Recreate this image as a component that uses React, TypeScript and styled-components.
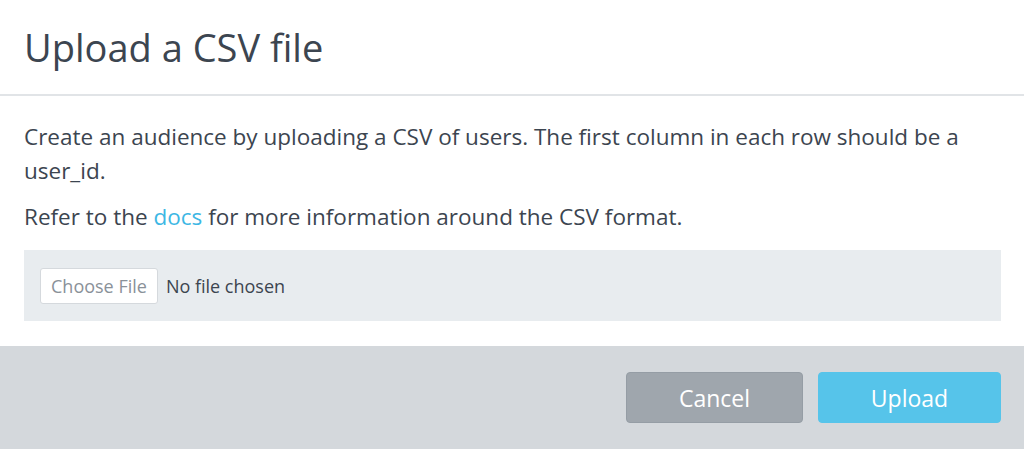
import styled, { createGlobalStyle } from "styled-components";

const GlobalStyle = createGlobalStyle`
  html, body {
    margin: 0;
    padding: 0;
    background: #ffffff;
  }
  body {
    font-family: "Open Sans", "Liberation Sans", sans-serif;
    color: #3c4550;
  }
`;

const Modal = styled.div`
  display: flex;
  flex-direction: column;
  width: 1024px;
  height: 449px;
  background: #fff;
  overflow: hidden;
`;

const ModalHeader = styled.div`
  height: 94px;
  padding: 0 24px;
  display: flex;
  align-items: center;
  border-bottom: 2px solid #e1e4e7;
`;

const ModalTitle = styled.h2`
  margin: 0;
  font-size: 38px;
  font-weight: 400;
  color: #3c4550;
`;

const ModalBody = styled.div`
  flex: 1;
  padding: 24px 23px 0 24px;
`;

const Paragraph = styled.p`
  margin: 0 0 12px;
  font-size: 22.5px;
  line-height: 34px;
  color: #3c4550;
`;

const DocsLink = styled.a`
  color: #3db7e4;
  text-decoration: none;
`;

const FileWell = styled.div`
  display: flex;
  align-items: center;
  gap: 8px;
  height: 71px;
  margin-top: 16px;
  padding: 0 16px;
  background: #e8ecef;
`;

const ChooseButton = styled.span`
  display: inline-flex;
  align-items: center;
  height: 36px;
  padding: 0 10px;
  box-sizing: border-box;
  background: #fff;
  border: 1px solid #d5d9dd;
  border-radius: 3px;
  font-size: 18px;
  color: #8a9199;
`;

const FileStatus = styled.span`
  font-size: 18px;
  color: #3c4550;
`;

const ModalFooter = styled.div`
  height: 103px;
  flex-shrink: 0;
  display: flex;
  align-items: center;
  justify-content: flex-end;
  gap: 15px;
  padding: 0 23px;
  background: #d4d8dc;
`;

const FooterButton = styled.button<{ $primary?: boolean }>`
  width: ${(p) => (p.$primary ? "183px" : "177px")};
  height: 51px;
  border-radius: 4px;
  border: 1px solid ${(p) => (p.$primary ? "#56c4ea" : "#959da5")};
  background: ${(p) => (p.$primary ? "#56c4ea" : "#9fa6ad")};
  color: #fff;
  font-family: "Open Sans", "Liberation Sans", sans-serif;
  font-size: 23px;
  cursor: pointer;
`;

export default function App() {
  return (
    <>
      <GlobalStyle />
      <Modal>
        <ModalHeader>
          <ModalTitle>Upload a CSV file</ModalTitle>
        </ModalHeader>
        <ModalBody>
          <Paragraph>
            Create an audience by uploading a CSV of users. The first column in each row should be a
            user_id.
          </Paragraph>
          <Paragraph>
            Refer to the <DocsLink href="#">docs</DocsLink> for more information around the CSV format.
          </Paragraph>
          <FileWell>
            <ChooseButton>Choose File</ChooseButton>
            <FileStatus>No file chosen</FileStatus>
          </FileWell>
        </ModalBody>
        <ModalFooter>
          <FooterButton>Cancel</FooterButton>
          <FooterButton $primary>Upload</FooterButton>
        </ModalFooter>
      </Modal>
    </>
  );
}
